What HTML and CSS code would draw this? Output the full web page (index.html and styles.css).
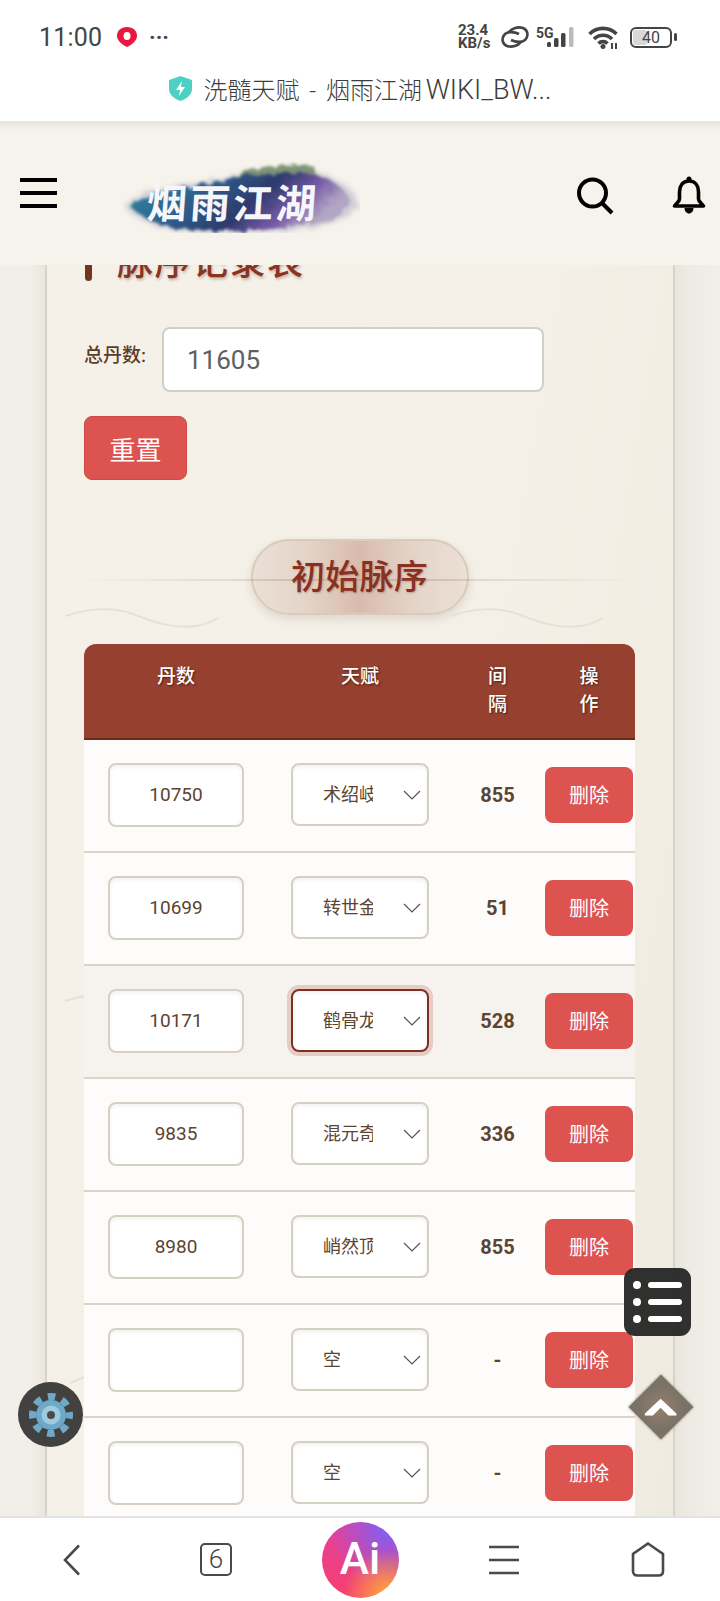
FILE: index.html
```html
<!DOCTYPE html>
<html lang="zh-CN">
<head>
    <meta charset="UTF-8">
    <meta name="viewport" content="width=device-width, initial-scale=1.0">
    <title>洗髓天赋 - 烟雨江湖 WIKI_BWIKI</title>
    <link rel="stylesheet" href="styles.css">
</head>
<body>
    <div class="status-bar">
        <span class="status-time">11:00</span>
        <svg class="status-app" width="20" height="20" viewBox="0 0 20 20">
            <path class="app-red" d="M10 0 C16 0 20 3.500 20 9 C20 14 14 18 10 20 C6 18 0 14 0 9 C0 3.500 4 0 10 0Z"/>
            <ellipse class="app-hole" cx="10" cy="9" rx="3.500" ry="4"/>
        </svg>
        <span class="status-dots">···</span>
        <div class="status-right">
            <div class="status-speed">23.4<br>KB/s</div>
            <svg class="status-link" width="30" height="22" viewBox="0 0 30 22">
                <path d="M19 8 C14 5.500 8 5.500 5 8 C1 12 2 18 7 20 C12 21.500 18 20 21 16"/>
                <path d="M11 14 C16 16.500 22 16.500 25 14 C29 10 28 4 23 2 C18 0.500 12 2 9 6"/>
            </svg>
            <svg class="status-signal" width="42" height="26" viewBox="0 0 42 26">
                <text class="signal-text" x="0" y="14">5G</text>
                <rect class="bar-on" x="11" y="18" width="4" height="5" rx="1.500"/>
                <rect class="bar-on" x="18" y="14" width="4.500" height="9" rx="1.500"/>
                <rect class="bar-on" x="25" y="9" width="4.500" height="14" rx="1.500"/>
                <rect class="bar-off" x="33" y="3" width="4.500" height="20" rx="1.500"/>
            </svg>
            <svg class="status-wifi" width="30" height="23" viewBox="0 0 30 23">
                <path d="M1.500 8 C9 0.500 21 0.500 28.500 8"/>
                <path d="M6 13 C11 8 19 8 24 13"/>
                <path d="M10.500 17.500 C13 15 17 15 19.500 17.500"/>
                <circle class="wifi-dot" cx="15" cy="20.500" r="2.500"/>
                <rect class="wifi-dot" x="23" y="17" width="2" height="6"/>
                <rect class="wifi-dot" x="27" y="17" width="2" height="6"/>
            </svg>
            <svg class="status-battery" width="47" height="21" viewBox="0 0 47 21">
                <rect class="battery-level" x="3" y="3" width="14" height="15" rx="2"/>
                <rect class="battery-shell" x="1" y="1" width="40" height="19" rx="5"/>
                <rect class="battery-nub" x="44" y="6" width="3" height="8" rx="1.500"/>
                <text class="battery-text" x="21" y="16">40</text>
            </svg>
        </div>
    </div>

    <div class="title-bar">
        <svg width="23" height="25" viewBox="0 0 23 25">
            <path class="shield" d="M11.500 0 L23 4 V13 C23 19 17 23 11.500 25 C6 23 0 19 0 13 V4Z"/>
            <path class="bolt" d="M13 5 L7 14 H11 L10 20 L16 11 H12Z"/>
        </svg>
        <span class="title-text">洗髓天赋 - 烟雨江湖<span class="title-latin"> WIKI_BW...</span></span>
    </div>

    <header class="site-header">
        <div class="hamburger"><span></span><span></span><span></span></div>
        <svg class="logo" width="238" height="71" viewBox="0 0 238 71">
            <defs>
                <linearGradient id="inkGrad" x1="0" y1="0" x2="1" y2="0.300">
                    <stop offset="0" stop-color="#8db8bf"/>
                    <stop offset="0.120" stop-color="#2f7f9c"/>
                    <stop offset="0.420" stop-color="#2f5a88"/>
                    <stop offset="0.650" stop-color="#2f3a6c"/>
                    <stop offset="0.830" stop-color="#7458a4"/>
                    <stop offset="1" stop-color="#b3a6c4"/>
                </linearGradient>
                <filter id="inkEdge" x="-10%" y="-20%" width="120%" height="140%">
                    <feTurbulence type="fractalNoise" baseFrequency="0.120" numOctaves="3" seed="4"/>
                    <feDisplacementMap in="SourceGraphic" scale="8"/>
                    <feGaussianBlur stdDeviation="1.400"/>
                </filter>
                <filter id="inkHalo" x="-10%" y="-20%" width="120%" height="140%">
                    <feTurbulence type="fractalNoise" baseFrequency="0.140" numOctaves="3" seed="9"/>
                    <feDisplacementMap in="SourceGraphic" scale="10"/>
                    <feGaussianBlur stdDeviation="2.500"/>
                </filter>
            </defs>
            <path class="logo-halo" filter="url(#inkHalo)" d="M1 43 C20 28 55 22 88 20 C110 12 150 8 195 10 C215 14 236 30 237 42 C228 58 200 66 170 68 C130 72 80 72 50 68 C28 63 10 55 1 43Z"/>
            <g filter="url(#inkEdge)">
                <path class="logo-sky" d="M112 20 L120 8 L135 7 L160 4 L190 3 L196 18 L150 26Z"/>
                <path class="logo-ink" d="M8 44 C25 31 55 26 88 22 C110 13 150 8 190 12 C210 16 228 30 229 42 C222 56 200 62 170 65 C130 70 80 70 50 66 C30 60 16 54 8 44Z"/>
            </g>
            <text class="logo-text" x="28" y="56">烟雨江湖</text>
        </svg>
        <svg class="icon-search" width="38" height="38" viewBox="0 0 38 38">
            <circle cx="16.500" cy="16" r="13.500"/>
            <path d="M26 26 L36 36"/>
        </svg>
        <svg class="icon-bell" width="34" height="38" viewBox="0 0 34 38">
            <path class="bell-body" d="M17 5 C10.500 5 7.500 10 7.500 16 V23 C7.500 26 4 27 2.500 30 H31.500 C30 27 26.500 26 26.500 23 V16 C26.500 10 23.500 5 17 5Z"/>
            <circle class="bell-fill" cx="17" cy="3" r="2.500"/>
            <path class="bell-fill" d="M12.500 32 H21.500 C21.500 35 19.500 37.500 17 37.500 C14.500 37.500 12.500 35 12.500 32Z"/>
        </svg>
    </header>

    <main class="page-main">
        <section class="card">
            <svg class="card-decor" width="20" height="410" viewBox="0 0 20 410">
                <path d="M0 16 C6 14 14 12 20 11"/>
                <path d="M5 398 C10 396 15 394 20 392"/>
            </svg>

            <h2 class="record-heading">脉序记录表</h2>

            <div class="total-row">
                <label class="total-label" for="totalDan">总丹数:</label>
                <input type="text" id="totalDan" class="total-input" value="11605">
            </div>

            <button class="reset-btn">重置</button>

            <div class="section-title">
                <span class="section-pill">初始脉序</span>
                <svg class="wave wave-left" width="154" height="22" viewBox="0 0 154 22">
                    <path d="M1 9 C22 1 48 0 68 7 C88 15 108 22 130 19 C140 18 148 14 153 11"/>
                </svg>
                <svg class="wave wave-right" width="154" height="22" viewBox="0 0 154 22">
                    <path d="M1 9 C22 1 48 0 68 7 C88 15 108 22 130 19 C140 18 148 14 153 11"/>
                </svg>
            </div>

            <table class="record-table">
                <thead>
                    <tr>
                        <th class="col-dan">丹数</th>
                        <th class="col-talent">天赋</th>
                        <th class="col-gap">间隔</th>
                        <th class="col-action">操作</th>
                    </tr>
                </thead>
                <tbody>
                    <tr>
                        <td><input type="text" class="dan-input" value="10750"></td>
                        <td>
                            <div class="talent-select">
                                <select><option>术绍岐黄</option></select>
                                <svg width="18" height="10" viewBox="0 0 18 10"><path d="M1 1 L9 9 L17 1"/></svg>
                            </div>
                        </td>
                        <td class="gap-cell">855</td>
                        <td><button class="delete-btn">删除</button></td>
                    </tr>
                    <tr>
                        <td><input type="text" class="dan-input" value="10699"></td>
                        <td>
                            <div class="talent-select">
                                <select><option>转世金身</option></select>
                                <svg width="18" height="10" viewBox="0 0 18 10"><path d="M1 1 L9 9 L17 1"/></svg>
                            </div>
                        </td>
                        <td class="gap-cell">51</td>
                        <td><button class="delete-btn">删除</button></td>
                    </tr>
                    <tr class="row-active">
                        <td><input type="text" class="dan-input" value="10171"></td>
                        <td>
                            <div class="talent-select is-focused">
                                <select><option>鹤骨龙筋</option></select>
                                <svg width="18" height="10" viewBox="0 0 18 10"><path d="M1 1 L9 9 L17 1"/></svg>
                            </div>
                        </td>
                        <td class="gap-cell">528</td>
                        <td><button class="delete-btn">删除</button></td>
                    </tr>
                    <tr>
                        <td><input type="text" class="dan-input" value="9835"></td>
                        <td>
                            <div class="talent-select">
                                <select><option>混元奇经</option></select>
                                <svg width="18" height="10" viewBox="0 0 18 10"><path d="M1 1 L9 9 L17 1"/></svg>
                            </div>
                        </td>
                        <td class="gap-cell">336</td>
                        <td><button class="delete-btn">删除</button></td>
                    </tr>
                    <tr>
                        <td><input type="text" class="dan-input" value="8980"></td>
                        <td>
                            <div class="talent-select">
                                <select><option>峭然顶立</option></select>
                                <svg width="18" height="10" viewBox="0 0 18 10"><path d="M1 1 L9 9 L17 1"/></svg>
                            </div>
                        </td>
                        <td class="gap-cell">855</td>
                        <td><button class="delete-btn">删除</button></td>
                    </tr>
                    <tr>
                        <td><input type="text" class="dan-input" value=""></td>
                        <td>
                            <div class="talent-select">
                                <select><option>空</option></select>
                                <svg width="18" height="10" viewBox="0 0 18 10"><path d="M1 1 L9 9 L17 1"/></svg>
                            </div>
                        </td>
                        <td class="gap-cell">-</td>
                        <td><button class="delete-btn">删除</button></td>
                    </tr>
                    <tr>
                        <td><input type="text" class="dan-input" value=""></td>
                        <td>
                            <div class="talent-select">
                                <select><option>空</option></select>
                                <svg width="18" height="10" viewBox="0 0 18 10"><path d="M1 1 L9 9 L17 1"/></svg>
                            </div>
                        </td>
                        <td class="gap-cell">-</td>
                        <td><button class="delete-btn">删除</button></td>
                    </tr>
                </tbody>
            </table>
        </section>
    </main>

    <nav class="bottom-nav">
        <div class="nav-cell">
            <svg class="nav-line" width="18" height="32" viewBox="0 0 18 32"><path d="M16 1.500 L2 16 L16 30.500"/></svg>
        </div>
        <div class="nav-cell"><span class="tab-count">6</span></div>
        <div class="nav-cell"><span class="ai-badge">Ai</span></div>
        <div class="nav-cell">
            <svg class="nav-line" width="30" height="30" viewBox="0 0 30 30"><path d="M0 2 H30 M0 15 H30 M0 28 H30"/></svg>
        </div>
        <div class="nav-cell">
            <svg class="nav-line" width="34" height="35" viewBox="0 0 34 35"><path d="M17 1.500 L32 12 V29 Q32 33.500 27.500 33.500 H6.500 Q2 33.500 2 29 V12Z"/></svg>
        </div>
    </nav>

    <div class="float-list">
        <div class="list-line"><i></i><b></b></div>
        <div class="list-line"><i></i><b></b></div>
        <div class="list-line"><i></i><b></b></div>
    </div>

    <div class="float-gear">
        <svg width="46" height="46" viewBox="0 0 46 46">
            <circle class="gear-teeth" cx="23" cy="23" r="18.500"/>
            <circle class="gear-body" cx="23" cy="23" r="15"/>
            <circle class="gear-ring" cx="23" cy="23" r="9.500"/>
            <circle class="gear-hole" cx="23" cy="23" r="4"/>
        </svg>
    </div>

    <div class="float-top">
        <svg width="32" height="17" viewBox="0 0 32 17"><path d="M0 15 L16 0 L32 15 L32 17 H24 L16 9 L8 17 H0Z"/></svg>
    </div>
</body>
</html>
```
FILE: styles.css
```css
* {
    margin: 0;
    padding: 0;
    box-sizing: border-box;
}

body {
    font-family: Roboto, 'Noto Sans CJK SC', sans-serif;
    width: 720px;
    height: 1601px;
    overflow: hidden;
    position: relative;
    display: flex;
    flex-direction: column;
    background: #f1eee7;
}

/* status bar */
.status-bar {
    height: 68px;
    padding: 6px 43px 0 39px;
    display: flex;
    align-items: center;
    background: #fff;
    color: #444;
}

.status-time {
    font-size: 25px;
    width: 78px;
    letter-spacing: 0.2px;
}

.app-red { fill: #e8173f; }
.app-hole { fill: #fff; }

.status-dots {
    margin-left: 12px;
    font-size: 22px;
    font-weight: 700;
    letter-spacing: 0;
}

.status-right {
    margin-left: auto;
    display: flex;
    align-items: center;
}

.status-speed {
    font-size: 15px;
    font-weight: 700;
    line-height: 13px;
    width: 42px;
}

.status-link path {
    fill: none;
    stroke: #444;
    stroke-width: 2.6;
}

.status-signal { margin-left: 6px; }

.signal-text {
    font-size: 14px;
    font-weight: 700;
    fill: #444;
}

.bar-on { fill: #444; }
.bar-off { fill: #bbb; }

.status-wifi { margin-left: 10px; }

.status-wifi path {
    fill: none;
    stroke: #444;
    stroke-width: 3.6;
}

.wifi-dot { fill: #444; }

.status-battery { margin-left: 12px; }

.battery-level { fill: #d8d8d8; }

.battery-shell {
    fill: none;
    stroke: #444;
    stroke-width: 2;
}

.battery-nub { fill: #444; }

.battery-text {
    font-size: 16px;
    fill: #444;
    text-anchor: middle;
}

/* url bar */
.title-bar {
    height: 53px;
    padding-bottom: 13px;
    display: flex;
    justify-content: center;
    align-items: center;
    gap: 12px;
    background: #fff;
}

.shield { fill: #4fd0c4; }
.bolt { fill: #fff; }

.title-text {
    font-size: 24px;
    font-weight: 300;
    word-spacing: 4px;
    color: #3c3c3c;
    white-space: nowrap;
}

.title-latin {
    font-size: 27px;
    word-spacing: -3px;
}

/* site header */
.site-header {
    height: 144px;
    padding: 0 14px 0 20px;
    display: flex;
    align-items: center;
    background: linear-gradient(180deg, #e6e3dc 0, #f6f3ec 9px);
    position: relative;
    z-index: 2;
}

.hamburger {
    width: 37px;
    display: flex;
    flex-direction: column;
    gap: 9px;
}

.hamburger span {
    display: block;
    height: 4px;
    background: #000;
}

.logo {
    margin: 9px 0 0 65px;
}

.logo-ink { fill: url(#inkGrad); }
.logo-sky { fill: #7f9478; }
.logo-halo { fill: rgba(135, 140, 175, 0.35); }

.logo-text {
    font-family: 'Noto Sans CJK SC', sans-serif;
    font-size: 40px;
    font-weight: 700;
    letter-spacing: 3px;
    fill: #f6f5fa;
    transform: skewX(-4deg);
}

.icon-search {
    margin: 5px 0 0 auto;
}

.icon-search circle,
.icon-search path {
    fill: none;
    stroke: #000;
    stroke-width: 4;
}

.icon-bell {
    margin: 3px 0 0 58px;
}

.bell-body {
    fill: none;
    stroke: #000;
    stroke-width: 3.6;
    stroke-linejoin: round;
}

.bell-fill { fill: #000; }

/* page */
.page-main {
    flex: 1;
    overflow: hidden;
    background: linear-gradient(90deg, #f1efe8 0, #f1efe8 30px, #e9e6de 45px, #e9e6de 675px, #eeebe4 690px, #f1efe8 720px);
}

.card {
    width: 630px;
    margin-left: 45px;
    padding: 0 38px 0 37px;
    position: relative;
    background: linear-gradient(100deg, #f5f1e8 0%, #f4f0e7 60%, #f0ebe0 100%);
    border-left: 2px solid #d8d3c7;
    border-right: 2px solid #d8d3c7;
    min-height: 100%;
}

/* faint strokes of the paper texture */
.card-decor {
    position: absolute;
    left: 18px;
    top: 750px;
}

.card-decor path {
    fill: none;
    stroke: #e6e1d6;
    stroke-width: 2;
}

.record-heading {
    margin-top: -30px;
    height: 46px;
    padding-left: 33px;
    position: relative;
    font-size: 36px;
    font-weight: 500;
    line-height: 56px;
    letter-spacing: 1.500px;
    color: #8b3423;
    text-shadow: 1px 2px 3px rgba(90, 40, 20, 0.3);
}

.record-heading::before {
    content: '';
    position: absolute;
    left: 1px;
    top: 2px;
    bottom: 0;
    width: 7px;
    border-radius: 4px;
    background: #6e3820;
}

.total-row {
    margin-top: 46px;
    display: flex;
    align-items: flex-start;
    gap: 15px;
}

.total-label {
    width: 63px;
    margin-top: 16px;
    font-size: 19px;
    font-weight: 500;
    line-height: 26px;
    color: #5c3d2a;
    white-space: nowrap;
}

.total-input {
    width: 382px;
    height: 65px;
    padding: 0 23px;
    font-family: inherit;
    font-size: 26px;
    color: #5f5f5f;
    background: #fff;
    border: 2px solid #d4cfc6;
    border-radius: 8px;
}

.reset-btn {
    display: block;
    width: 103px;
    height: 64px;
    margin-top: 24px;
    font-family: inherit;
    font-size: 26px;
    color: #fff;
    background: #dc5350;
    border: 1px solid #cf4a47;
    border-radius: 8px;
}

.section-title {
    height: 76px;
    margin-top: 59px;
    position: relative;
    display: flex;
    justify-content: center;
}

.section-title::after {
    content: '';
    position: absolute;
    left: -4px;
    right: -5px;
    top: 40px;
    height: 2px;
    background: linear-gradient(90deg, transparent, rgba(139, 90, 60, 0.2) 35%, rgba(139, 90, 60, 0.2) 65%, transparent);
}

.section-pill {
    width: 218px;
    height: 76px;
    font-size: 34px;
    font-weight: 500;
    line-height: 72px;
    letter-spacing: 0.300px;
    text-align: center;
    color: #8b3020;
    text-shadow: 1px 1px 2px rgba(90, 40, 20, 0.3);
    background: linear-gradient(90deg, #ebe0d6 0%, #e4d4c8 25%, #d9bbae 50%, #e4d4c8 75%, #ebe0d6 100%);
    border: 2px solid #d8cbbb;
    border-radius: 38px;
    box-shadow: 0 4px 10px rgba(90, 60, 40, 0.14);
}

.wave {
    position: absolute;
    top: 68px;
}

.wave-left { left: -19px; }
.wave-right { left: 366px; }

.wave path {
    fill: none;
    stroke: #e6e1d6;
    stroke-width: 2;
}

/* table */
.record-table {
    width: 551px;
    margin-top: 29px;
    position: relative;
    table-layout: fixed;
    border-collapse: separate;
    border-spacing: 0;
}

.record-table th {
    height: 96px;
    padding: 19px 30px 0;
    vertical-align: top;
    font-size: 19px;
    font-weight: 500;
    line-height: 28px;
    color: #fff;
    text-shadow: 1px 1px 2px rgba(50, 15, 5, 0.7);
    background: #96412f;
    border-bottom: 2px solid #6b2c1d;
}

.col-dan {
    width: 184px;
    border-top-left-radius: 12px;
}

.col-talent { width: 184px; }
.col-gap { width: 91px; }

.col-action {
    width: 92px;
    border-top-right-radius: 12px;
}

.record-table th.col-gap,
.record-table th.col-action {
    padding-left: 36px;
    padding-right: 36px;
}

.record-table td {
    height: 113px;
    padding-bottom: 2px;
    text-align: center;
    vertical-align: middle;
    background: #fefcfa;
    border-bottom: 2px solid #d9d3c8;
}

.record-table .row-active td {
    background: #f6f3ee;
}

.dan-input {
    width: 136px;
    height: 64px;
    font-family: inherit;
    font-size: 19px;
    text-align: center;
    color: #5c4433;
    background: #fff;
    border: 2px solid #d6cfc3;
    border-radius: 8px;
    box-shadow: inset 0 2px 4px rgba(0, 0, 0, 0.06);
}

.talent-select {
    width: 138px;
    height: 63px;
    margin: 0 auto;
    position: relative;
    border-radius: 8px;
}

.talent-select select {
    appearance: none;
    width: 100%;
    height: 100%;
    padding: 0 54px 0 30px;
    font-family: inherit;
    font-size: 18px;
    color: #5c4433;
    background: #fff;
    border: 2px solid #d6cfc3;
    border-radius: 8px;
    box-shadow: inset 0 2px 4px rgba(0, 0, 0, 0.06);
}

.talent-select.is-focused {
    box-shadow: 0 0 0 4px rgba(170, 70, 50, 0.22);
}

.talent-select.is-focused select {
    border-color: #7e2f22;
}

/* arrow lies over the select */
.talent-select svg {
    position: absolute;
    right: 8px;
    top: 27px;
    pointer-events: none;
}

.talent-select path {
    fill: none;
    stroke: #5f5347;
    stroke-width: 1.200;
}

.gap-cell {
    font-size: 20px;
    font-weight: 700;
    color: #5c4433;
}

.delete-btn {
    display: block;
    width: 88px;
    height: 56px;
    margin-left: 2px;
    font-family: inherit;
    font-size: 20px;
    color: #fff;
    background: #dc5350;
    border: none;
    border-radius: 8px;
}

/* bottom nav */
.bottom-nav {
    height: 85px;
    display: grid;
    grid-template-columns: repeat(5, 1fr);
    background: #fff;
    border-top: 2px solid #e2e2e2;
    position: relative;
    z-index: 2;
}

.nav-cell {
    display: flex;
    justify-content: center;
    align-items: center;
}

.nav-line path {
    fill: none;
    stroke: #4a4a4a;
    stroke-width: 2.600;
}

.tab-count {
    width: 32px;
    height: 33px;
    font-size: 26px;
    font-weight: 300;
    line-height: 29px;
    text-align: center;
    color: #444;
    border: 2px solid #4a4a4a;
    border-radius: 5px;
}

.ai-badge {
    width: 77px;
    height: 76px;
    font-size: 44px;
    font-weight: 500;
    line-height: 74px;
    text-align: center;
    color: #fff;
    border-radius: 50%;
    background:
        radial-gradient(circle at 85% 95%, #ffaa3c 0, rgba(255, 150, 60, 0) 45%),
        radial-gradient(circle at 85% 10%, #7f5ff5 0, rgba(127, 95, 245, 0) 62%),
        linear-gradient(180deg, #e6409c 0%, #f5406e 100%);
}

/* floating buttons */
.float-list {
    position: absolute;
    left: 624px;
    top: 1268px;
    z-index: 3;
    width: 67px;
    height: 68px;
    padding: 10px 9px;
    display: flex;
    flex-direction: column;
    justify-content: space-between;
    background: rgba(40, 40, 40, 0.96);
    border-radius: 11px;
}

.list-line {
    display: flex;
    align-items: center;
    gap: 7px;
    height: 14px;
}

.list-line i {
    width: 8px;
    height: 8px;
    border-radius: 50%;
    background: #fff;
}

.list-line b {
    flex: 1;
    height: 6px;
    border-radius: 3px;
    background: #fff;
}

.float-gear {
    position: absolute;
    left: 18px;
    top: 1382px;
    z-index: 3;
    width: 65px;
    height: 65px;
    display: flex;
    justify-content: center;
    align-items: center;
    border-radius: 50%;
    background: rgba(50, 50, 50, 0.92);
}

.gear-teeth {
    fill: none;
    stroke: #6fa9c8;
    stroke-width: 7;
    stroke-dasharray: 7.500 7.030;
    stroke-dashoffset: 3.750;
}

.gear-body { fill: #6fa9c8; }
.gear-ring { fill: #9fcbe0; }
.gear-hole { fill: #4a4a4a; }

.float-top {
    position: absolute;
    left: 638px;
    top: 1384px;
    z-index: 3;
    width: 46px;
    height: 46px;
    transform: rotate(45deg);
    background: radial-gradient(circle, #93806c 0, #7a7266 70%);
    box-shadow: 0 0 3px rgba(120, 105, 90, 0.7);
    display: flex;
    justify-content: center;
    align-items: center;
}

.float-top svg {
    transform: rotate(-45deg);
}

.float-top path {
    fill: #fff;
}
```
